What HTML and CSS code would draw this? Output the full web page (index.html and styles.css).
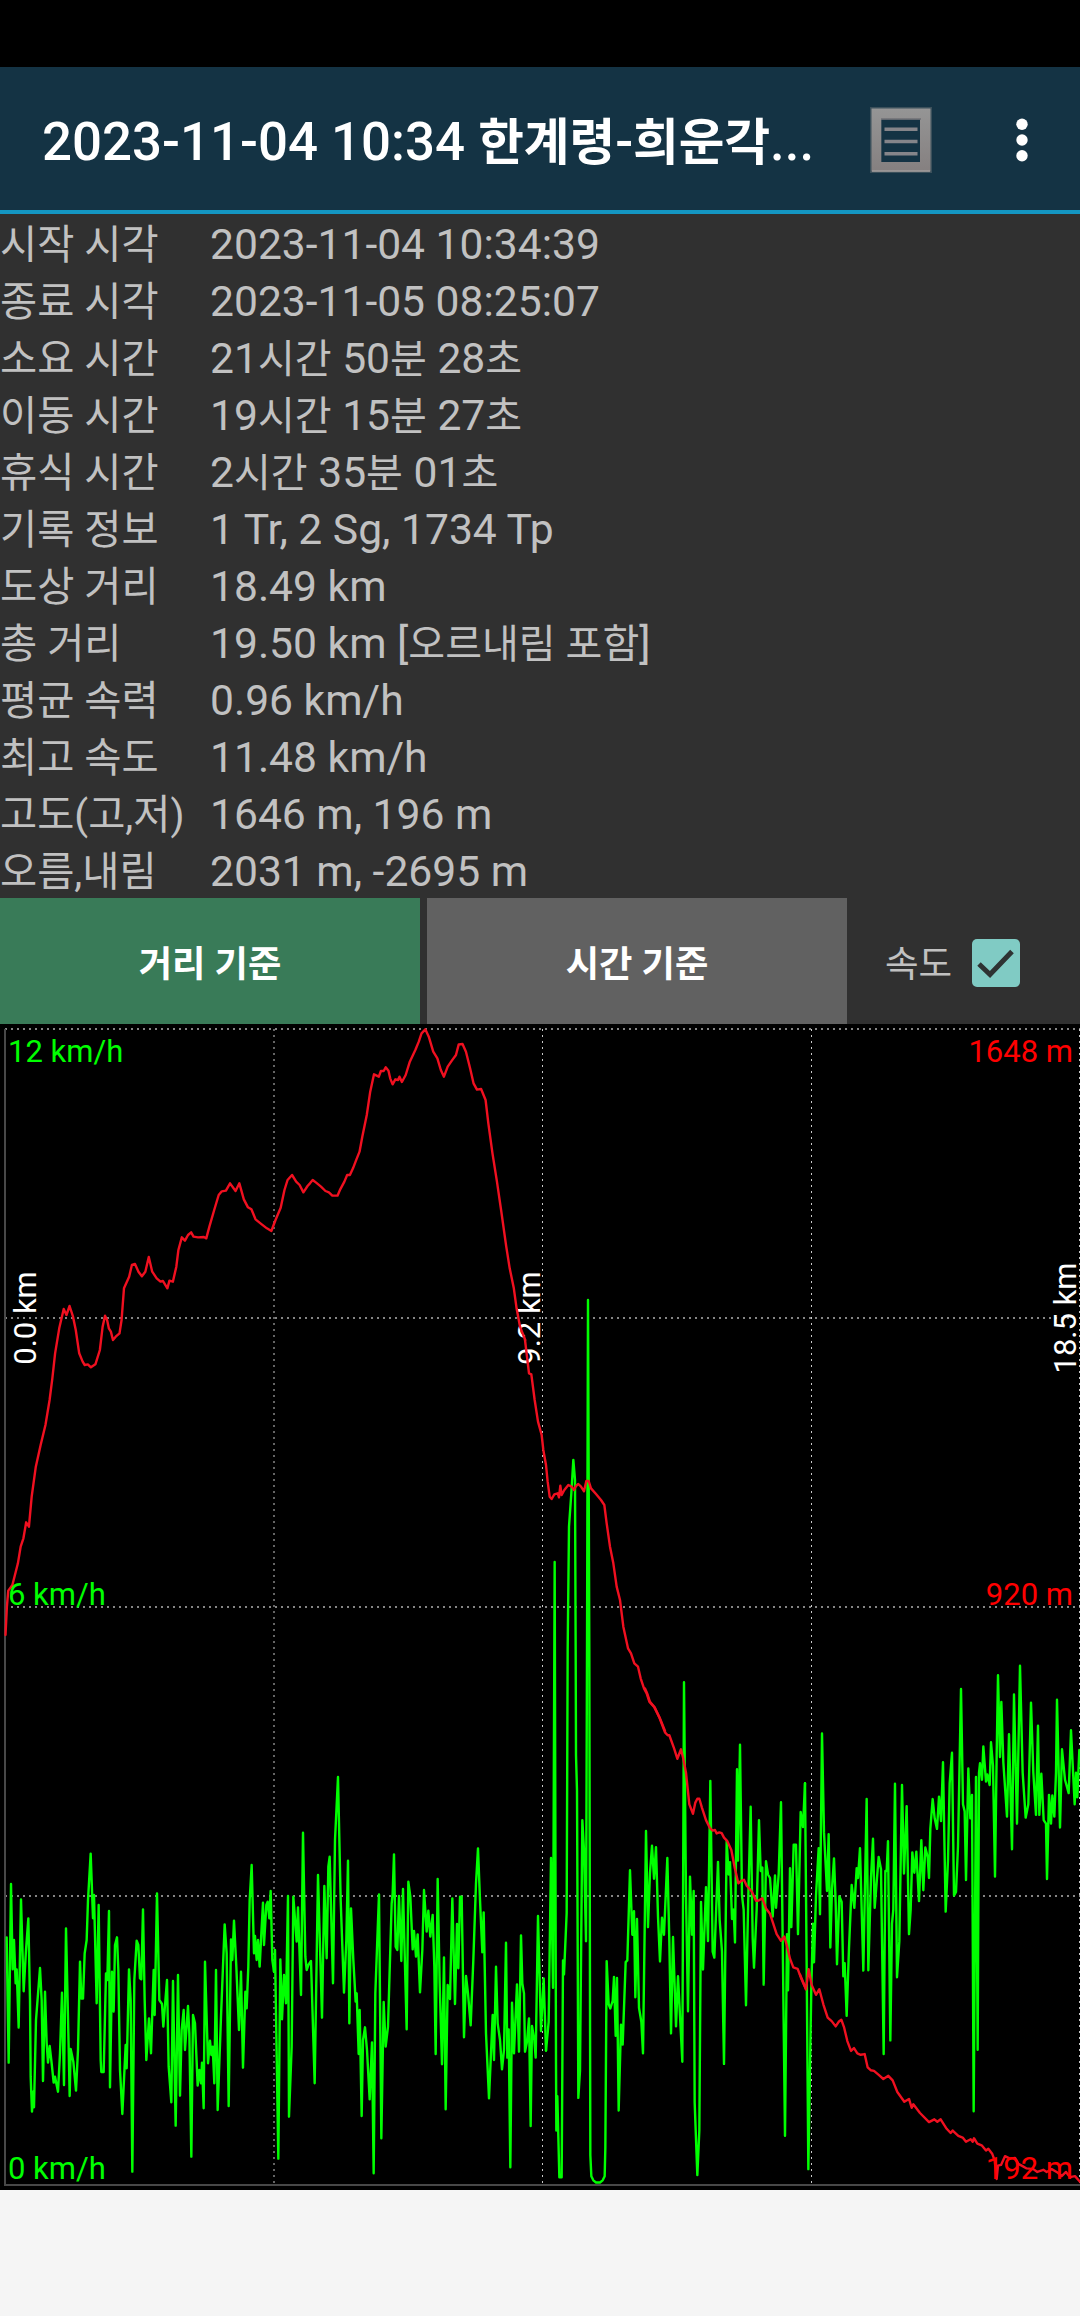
FILE: index.html
```
<!DOCTYPE html>
<html lang="ko">
<head>
<meta charset="utf-8">
<title>2023-11-04 10:34 한계령-희운각</title>
<link rel="stylesheet" href="styles.css">
</head>
<body>
<div class="status-bar"></div>
<header class="app-bar">
  <h1 class="title">2023-11-04 10:34 <span class="ko">한계령</span>-<span class="ko">희운각</span>...</h1>
  <svg class="list-icon" width="66" height="70" viewBox="0 0 66 70">
    <defs>
      <linearGradient id="frame" x1="0" y1="0" x2="0" y2="1">
        <stop offset="0" stop-color="#959595"/><stop offset="1" stop-color="#858080"/>
      </linearGradient>
    </defs>
    <path fill="#3b505b" d="M2 2h62v66H2z"/>
    <path fill="url(#frame)" fill-rule="evenodd" d="M3.5 3.5h59v63h-59zM13.5 14.500v42.500h38.500v-42.500z"/>
    <path fill="#143344" d="M13.500 14.500h38.500v42.500h-38.500z"/>
    <path stroke="#6f7176" stroke-width="1.500" d="M13 14h40"/>
    <path stroke="#a19d9c" stroke-width="1.500" d="M4 66h58"/>
    <path stroke="#85858a" stroke-width="3.600" d="M16.500 24.200h33M16.500 36.500h33M16.500 48.700h33"/>
  </svg>
  <svg class="more-icon" width="12" height="44" viewBox="0 0 12 44" fill="#fff">
    <circle cx="6" cy="6.200" r="5.700"/><circle cx="6" cy="22" r="5.700"/><circle cx="6" cy="37.800" r="5.700"/>
  </svg>
</header>
<dl class="stats">
  <dt>시작 시각</dt><dd>2023-11-04 10:34:39</dd>
  <dt>종료 시각</dt><dd>2023-11-05 08:25:07</dd>
  <dt>소요 시간</dt><dd>21<span class="ko">시간</span> 50<span class="ko">분</span> 28<span class="ko">초</span></dd>
  <dt>이동 시간</dt><dd>19<span class="ko">시간</span> 15<span class="ko">분</span> 27<span class="ko">초</span></dd>
  <dt>휴식 시간</dt><dd>2<span class="ko">시간</span> 35<span class="ko">분</span> 01<span class="ko">초</span></dd>
  <dt>기록 정보</dt><dd>1 Tr, 2 Sg, 1734 Tp</dd>
  <dt>도상 거리</dt><dd>18.49 km</dd>
  <dt>총 거리</dt><dd>19.50 km [<span class="ko">오르내림 포함</span>]</dd>
  <dt>평균 속력</dt><dd>0.96 km/h</dd>
  <dt>최고 속도</dt><dd>11.48 km/h</dd>
  <dt>고도(고,저)</dt><dd>1646 m, 196 m</dd>
  <dt>오름,내림</dt><dd>2031 m, -2695 m</dd>
</dl>
<div class="controls">
  <button class="mode mode-active">거리 기준</button>
  <button class="mode">시간 기준</button>
  <label class="speed"><span class="speed-name">속도</span>
    <svg width="48" height="48" viewBox="0 0 48 48">
      <rect width="48" height="48" rx="5" fill="#80cbc4"/>
      <path d="M7 25l11 10.500L40 12.500" fill="none" stroke="#2e3333" stroke-width="5"/>
    </svg>
  </label>
</div>
<svg class="chart" width="1080" height="1166" viewBox="0 1024 1080 1166">
  <g class="grid">
    <path class="grid-h" d="M5 1029H1080M5 1318H1080M5 1607H1080M5 1896H1080"/>
    <path class="grid-v" d="M274 1029V2185M542.500 1029V2185M811.500 1029V2185M1079.500 1029V2185"/>
    <path class="axis" d="M5 1029V2185H1080"/>
  </g>
  <g class="distance">
    <text transform="translate(36 1318) rotate(-90)">0.0 km</text>
    <text transform="translate(540 1318) rotate(-90)">9.2 km</text>
    <text transform="translate(1076 1318) rotate(-90)">18.5 km</text>
  </g>
  <g class="line speed-line">
    <polyline transform="translate(0 1700) scale(.33333)" points="20,712 26,1088 33,552 38,808 42,720 47,850 50,808 56,983 63,598 71,874 78,750 85,655 90,900 92,1130 96,1235 99,1175 102,1222 108,960 120,804 125,900 129,1143 135,875 140,1030 144,1088 149,1038 155,1090 161,1148 165,1130 174,1175 180,1060 186,878 192,1155 198,685 204,950 209,1188 212,1047 220,1085 228,1172 234,1050 240,785 244,896 249,896 254,760 260,720 264,600 272,461 279,655 282,585 290,910 296,615 302,1080 304,1116 311,1116 318,820 322,840 327,633 330,1162 336,815 341,935 345,735 351,712 355,810 360,1110 367,1242 377,1035 380,1105 387,808 392,900 397,1415 403,840 410,722 415,735 420,835 424,838 429,628 434,900 439,1080 447,955 453,1060 461,810 464,945 471,580 478,900 486,912 490,980 501,840 506,1100 514,1207 519,843 527,1277 534,825 540,1187 545,990 551,930 555,1050 564,918 568,1000 574,1370 579,945 585,970 593,1157 598,1110 603,1150 606,1088 611,1225 615,785 624,1090 630,1022 634,1065 638,1040 643,1150 648,810 653,1230 663,950 674,673 680,760 686,1218 693,718 697,780 702,662 709,800 717,990 723,815 729,1103 736,875 740,925 745,800 749,600 755,495 762,760 765,708 770,780 774,720 779,800 784,700 789,608 792,735 799,615 803,605 808,655 812,573 817,780 822,815"/>
    <polyline transform="translate(270 1700) scale(.33333)" points="12,815 15,750 25,1376 31,778 36,958 42,825 48,910 54,588 57,1250 65,1040 70,590 80,725 84,622 93,885 99,398 106,770 110,810 115,795 123,783 134,1150 144,525 156,953 163,558 170,775 175,500 179,470 189,850 195,420 204,231 212,600 222,878 229,720 234,482 238,970 243,625 250,780 257,905 260,880 266,1062 269,930 275,1248 279,1020 285,982 291,1050 299,1198 306,1027 311,1420 316,880 327,583 334,1315 341,906 347,1040 354,980 365,610 368,580 372,463 377,740 382,750 387,588 394,783 399,567 410,988 415,545 421,590 428,748 432,693 438,770 443,703 450,877 457,750 462,570 470,695 475,632 481,710 488,645 493,800 497,1062 503,537 509,850 516,1093 522,772 527,1228 533,855 540,897 547,595 555,912 561,672 565,805 570,590 575,590 582,1012 588,828 594,880 602,976 610,780 618,550 624,445 630,600 637,757 641,637 648,1000 657,1195 668,945 672,1080 678,800 683,970 690,1020 696,1108 702,1050 708,728 712,1073 716,988 721,1402 726,908 732,1060 741,853 747,1055 753,706 757,850 762,880 765,1055 771,1025 777,955 782,1278 786,978 793,1020 797,1073 804,648 813,993 821,835 828,1052"/>
    <polyline transform="translate(530 1650) scale(.33333 .35076)" points="48,1142 56,1060 63,593 69,963 74,-251 78,1180 79,1370 82,1272 88,1503 95,1503 99,885 102,925 110,750 113,0 117,-352 124,-447 130,-542 135,-485 137,0 138,300 141,400 145,1277 150,1200 157,485 162,570 168,830 171,0 174,-998 178,0 180,1000 181,1440 184,1500 190,1512 198,1518 210,1518 218,1512 224,1500 226,1420 230,887 236,1010 241,1022 248,1000 252,932 257,1100 261,935 266,1313 273,1068 278,1125 287,890 292,885 300,628 307,812 312,745 316,990 321,767 327,1020 334,1060 339,1150 348,516 354,790 360,635 366,558 372,652 378,562 384,760 390,888 396,763 402,812 412,593 418,830 423,1093 429,818 438,1073 444,930 457,1174 462,92 468,700 474,1030 480,646 486,812 491,687 494,1290 502,1497 508,1370 513,718 519,911 528,676 534,830 541,373 548,860 553,877 564,604 569,770 576,860 582,1180 590,545 596,640 600,605 606,767 611,740 615,834 621,340 624,600 630,270 636,700 641,740 648,1013 655,700 662,447 668,820 672,906 680,740 687,485 692,630 697,620 701,954 708,602 714,640 720,650 728,760 735,643 738,735 746,640 753,434 759,900 765,1385 771,810 774,970 780,622 784,790 791,555 798,555 804,810 812,462 819,505 825,380"/>
    <polyline transform="translate(800 1650) scale(.33333 .35076)" points="15,380 20,900 25,1480 34,960 39,780 42,890 48,700 56,565 60,753 66,238 72,520 81,687 86,525 91,848 96,680 102,594 107,720 111,896 118,702 125,718 130,930 134,893 140,1043 147,850 155,670 163,735 170,622 174,650 180,565 190,914 200,425 205,913 213,650 219,538 224,735 236,590 243,625 251,1152 256,630 260,630 264,545 271,1113 276,780 280,740 285,381 291,933 298,830 306,385 312,637 320,445 327,810 332,740 337,577 343,635 349,575 357,716 364,542 370,685 376,563 383,590 387,650 391,510 398,425 404,480 411,510 417,418 423,488 429,320 437,746 444,600 449,380 456,293 462,700 468,690 474,560 483,111 489,440 494,460 498,656 505,338 511,480 516,413 521,1315 528,362 533,1140 537,350 540,323 546,370 550,275 558,375 562,355 569,385 573,263 579,330 585,646 590,300 594,72 600,305 604,148 610,320 621,475 627,240 636,568 642,127 651,495 660,45 668,350 677,478 685,440 693,150 700,350 708,470 714,216 718,470 724,353 731,485 738,495 741,653 747,413 753,495 757,415 763,475 768,350 771,142 780,506 786,283 795,370 806,408 813,229 824,440 828,350 832,420 838,285 842,300"/>
  </g>
  <g class="line altitude-line">
    <polyline transform="translate(0 1020) scale(.34439 .33333)" points="16,1845 20,1760 24,1712 36,1695 52,1630 60,1580 68,1555 76,1507 84,1520 92,1430 104,1340 118,1275 132,1215 144,1140 152,1075 160,1000 172,925 185,867 193,885 202,858 212,890 220,930 230,1000 240,1025 246,1035 255,1033 264,1042 277,1033 290,990 298,920 305,887 311,900 316,925 322,935 328,960 336,950 347,940 353,900 360,805 375,770 383,735 392,732 402,755 412,769 422,755 432,711 442,755 455,775 466,785 473,783 486,805 492,782 502,785 512,740 518,690 528,652 537,662 546,645 555,637 562,650 575,652 592,651 599,655 608,620 622,570 635,525 644,514 656,512 668,490 684,513 695,490 708,538 720,562 730,568 742,598 760,613 775,625 788,633 800,600 815,563 826,510 835,480 848,465 860,485 870,495 881,517 893,498 900,490 908,480 918,488 932,500 945,513 955,517 965,527 980,527 988,508 1000,485 1008,465 1016,465 1025,445 1035,418 1044,395 1052,350 1065,285 1075,215 1086,163 1100,170 1106,153 1114,153 1120,142 1128,152 1133,175 1140,193 1148,178 1156,180 1160,170 1167,186 1178,165 1190,125 1206,90 1216,65 1224,40 1235,28 1245,50 1258,95 1270,115 1280,150 1289,170 1300,140 1312,122 1324,105 1332,73 1343,72 1353,95 1365,145 1375,190 1385,209 1397,207 1410,240 1418,310 1430,400 1443,485 1455,570 1470,680 1480,745 1492,805 1500,865 1510,920 1525,960"/>
    <polyline transform="translate(520 1280) scale(.33333)" points="15,180 27,280 34,283 44,360 54,425 65,465 70,510 78,555 83,605 89,650 95,657 103,643 113,640 117,652 121,617 125,645 133,630 145,615 155,620 162,630 168,618 175,612 183,620 192,634 199,603 206,603 213,625 228,642 243,660 253,675 260,730 270,800 280,850 290,920 300,960 310,1040 324,1105 333,1120 343,1150 354,1160 362,1195 372,1225 380,1240 388,1265 403,1282 420,1315 435,1353"/>
    <polyline transform="translate(530 1650) scale(.33333 .35076)" points="345,110 352,125 360,148 374,163 387,190 405,235 413,243 418,243 432,280 442,310 453,283 460,310 468,350 478,440 489,467 496,435 502,424 508,424 516,450 528,485 540,508 548,515 555,513 560,523 568,520 575,522 582,535 592,545 604,570 614,620 625,665 634,658 642,655 650,672 665,688 678,715 686,714 697,708 708,737 720,752 728,775 740,810 753,829 763,817 770,840 780,880 790,905 803,909 813,935 828,967"/>
    <polyline transform="translate(800 1650) scale(.33333 .35076)" points="0,925 18,967 26,910 35,955 48,983 58,967 70,1010 83,1048 95,1058 107,1073 116,1060 124,1054 132,1075 142,1115 153,1143 162,1135 172,1150 182,1154 194,1152 203,1190 212,1198 222,1200 237,1212 250,1223 265,1214 278,1227 292,1260 313,1288 327,1280 335,1305 340,1295 360,1320 387,1346 403,1338 412,1345 422,1338 440,1365 452,1377 458,1370 475,1385 488,1390 498,1402 512,1395 518,1402 522,1392 532,1407 545,1412 558,1427 565,1422 577,1437 584,1455 590,1508 594,1470 603,1468 615,1443 630,1450 645,1448 655,1465 665,1470 680,1478 700,1480 712,1488 730,1482 740,1488 755,1480 770,1488 785,1500 798,1488 810,1503 825,1500 842,1518"/>
  </g>
  <g class="speed-scale">
    <text x="8" y="1062">12 km/h</text><text x="8" y="1605">6 km/h</text><text x="8" y="2179">0 km/h</text>
  </g>
  <g class="altitude-scale">
    <text x="1073" y="1062">1648 m</text><text x="1073" y="1605">920 m</text><text x="1073" y="2179">192 m</text>
  </g>
</svg>
</body>
</html>
```
FILE: styles.css
```
* { box-sizing: border-box; }

body {
  margin: 0;
  min-height: 2316px;
  background: #f5f5f5;
  font-family: Roboto, "Noto Sans CJK KR", sans-serif;
}

.status-bar { height: 67px; background: #000; }

.app-bar {
  display: flex;
  align-items: center;
  height: 147px;
  padding: 0 52px 0 42px;
  background: #143344;
  border-bottom: 4px solid #1496c2;
}

.title {
  flex: 1;
  margin: 0;
  padding-top: 8px;
  color: #fff;
  font-size: 52.800px;
  font-weight: 500;
  line-height: 60px;
  white-space: nowrap;
}

.ko { font-size: .94em; }
.title .ko { font-weight: 700; }

.more-icon { margin-left: 82px; }
.list-icon, .more-icon { position: relative; top: 1px; }

.stats {
  display: grid;
  grid-template-columns: 210px 1fr;
  grid-auto-rows: 57px;
  margin: 0;
  background: #303030;
  color: #c1c1c1;
  font-size: 42.600px;
  line-height: 57px;
  white-space: nowrap;
}

.stats dt, .stats dd { margin: 0; height: 57px; padding-top: 2px; }
.stats dt { font-size: 40.400px; padding-top: 3px; }

.controls {
  display: flex;
  gap: 7px;
  height: 126px;
  background: #303030;
}

.mode {
  width: 420px;
  padding: 0;
  border: 0;
  background: #616161;
  color: #fff;
  font: 700 36.300px Roboto, "Noto Sans CJK KR", sans-serif;
}

.mode-active { background: #397b58; }

.speed {
  display: flex;
  align-items: center;
  gap: 20px;
  margin-left: 31px;
  padding-top: 4px;
  color: #c1c1c1;
  font-size: 36.500px;
}

.speed-name { padding-bottom: 4px; }

.chart { display: block; background: #000; }

.grid path { fill: none; }
.grid-h { stroke: #858585; stroke-width: 2; stroke-dasharray: 2 4; }
.grid-v { stroke: #c8c8c8; stroke-width: 1; stroke-dasharray: 2 4; }
.axis { stroke: #484848; stroke-width: 2; }

.chart text { font-size: 31px; }
.distance { fill: #fff; text-anchor: middle; }
.speed-scale { fill: #0f0; }
.altitude-scale { fill: #f00; text-anchor: end; }

.line polyline {
  fill: none;
  stroke-width: 2.400;
  stroke-linejoin: round;
  stroke-linecap: round;
  vector-effect: non-scaling-stroke;
}

.speed-line { stroke: #0f0; }
.altitude-line { stroke: #f01020; }
```
